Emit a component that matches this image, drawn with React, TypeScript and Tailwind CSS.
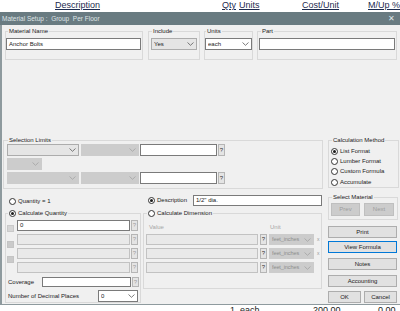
import React from "react";

type Kind = "white" | "light" | "disabled";

const Chevron = ({ c }: { c: string }) => (
  <svg width="7" height="4" viewBox="0 0 7 4" className="shrink-0">
    <polyline points="0.5,0.5 3.5,3.3 6.5,0.5" fill="none" stroke={c} strokeWidth="0.8" />
  </svg>
);

function Select({ cls, kind, value, tcls = "" }: { cls: string; kind: Kind; value?: string; tcls?: string }) {
  const base =
    kind === "white"
      ? "bg-white border-[#7a7a7a]"
      : kind === "light"
      ? "bg-[#e5e5e5] border-[#acacac]"
      : "bg-[#cccccc] border-[#cccccc]";
  return (
    <div className={`${cls} ${base} border flex items-center pl-[2px] pr-[2px] shrink-0`}>
      <span className={`flex-1 whitespace-nowrap overflow-hidden ${tcls}`}>{value}</span>
      <Chevron c={kind === "disabled" ? "#a3a3a3" : "#5a5a5a"} />
    </div>
  );
}

function Input({ cls, disabled, value }: { cls: string; disabled?: boolean; value?: string }) {
  return (
    <div
      className={`${cls} border flex items-center pl-[2px] shrink-0 whitespace-nowrap ${
        disabled ? "bg-[#e9e9e9] border-[#c2c2c2]" : "bg-white border-[#7a7a7a]"
      }`}
    >
      {value}
    </div>
  );
}

function Q({ cls, dim }: { cls: string; dim?: boolean }) {
  return (
    <div
      className={`${cls} w-[7px] border border-[#b5b5b5] bg-[#e4e4e4] flex items-center justify-center shrink-0 text-[6px] ${
        dim ? "text-[#9d9d9d]" : "text-[#333]"
      }`}
    >
      ?
    </div>
  );
}

const Radio = ({ on }: { on?: boolean }) => (
  <span className="w-[7px] h-[7px] rounded-full border border-[#333] bg-white flex items-center justify-center shrink-0">
    {on && <span className="w-[3px] h-[3px] rounded-full bg-[#1a1a1a]" />}
  </span>
);

function Group({
  cls,
  label,
  labelCls = "left-[2px]",
  children,
  inner = "",
}: {
  cls: string;
  label: React.ReactNode;
  labelCls?: string;
  children?: React.ReactNode;
  inner?: string;
}) {
  return (
    <div className={`${cls} relative border border-[#d9d9d9] shrink-0`}>
      <div className={`absolute -top-[4px] ${labelCls} bg-[#f0f0f0] px-[1px] leading-[7px] flex items-center whitespace-nowrap`}>
        {label}
      </div>
      <div className={inner}>{children}</div>
    </div>
  );
}

function Btn({ cls, children, extra = "" }: { cls: string; children: React.ReactNode; extra?: string }) {
  return (
    <div className={`${cls} h-[12px] bg-[#e1e1e1] border border-[#adadad] flex items-center justify-center whitespace-nowrap shrink-0 ${extra}`}>
      {children}
    </div>
  );
}

export default function App() {
  return (
    <div className="w-[400px] h-[311px] overflow-hidden bg-white flex flex-col font-['Liberation_Sans',Arial,sans-serif] text-[#1a1a1a]">
      {/* underlying list header */}
      <div className="h-[12px] shrink-0 flex items-start text-[9px] leading-[11px] text-[#1d2b4f]">
        <span className="w-[222px] pl-[55px]">
          <span className="underline">Description</span>
        </span>
        <span className="w-[17px]">
          <span className="underline">Qty</span>
        </span>
        <span className="w-[63px]">
          <span className="underline">Units</span>
        </span>
        <span className="w-[66px]">
          <span className="underline">Cost/Unit</span>
        </span>
        <span className="underline whitespace-nowrap">M/Up %</span>
      </div>

      {/* title bar */}
      <div className="h-[13px] shrink-0 bg-[#697b81] flex items-center pl-[2px] pr-[5px] text-[6.5px] text-[#dfe5e7]">
        <span className="whitespace-pre">Material Setup :  Group  Per Floor</span>
        <span className="ml-auto text-[8px] leading-[8px]">✕</span>
      </div>

      {/* dialog body */}
      <div className="h-[280px] shrink-0 bg-[#f0f0f0] border-l-2 border-b border-[#8e9a9e] flex flex-col text-[6px] leading-[7px]">
        {/* section A */}
        <div className="flex pt-[6px] h-[35px] shrink-0">
          <Group cls="ml-[3px] w-[138px] h-[29px]" label="Material Name" inner="pt-[6px]">
            <Input cls="w-[135px] h-[12px]" value="Anchor Bolts" />
          </Group>
          <Group cls="ml-[5px] w-[52px] h-[29px]" label="Include" labelCls="left-[3px]" inner="pt-[6px] pl-[2px]">
            <Select cls="w-[46px] h-[12px]" kind="light" value="Yes" />
          </Group>
          <Group cls="ml-[4px] w-[49px] h-[29px]" label="Units" labelCls="left-[1px]" inner="pt-[6px]">
            <Select cls="w-[47px] h-[12px]" kind="white" value="each" />
          </Group>
          <Group cls="ml-[4px] w-[140px] h-[29px]" label="Part" labelCls="left-[3px]" inner="pt-[6px] pl-[1px]">
            <Input cls="w-[136px] h-[12px]" />
          </Group>
        </div>

        {/* section B */}
        <div className="flex mt-[80px] h-[49px] shrink-0">
          <Group
            cls="ml-[1px] w-[320px] h-[49px]"
            label="Selection Limits"
            labelCls="left-[4px]"
            inner="pt-[3px] pl-[3px] flex flex-col gap-[2px]"
          >
            <div className="flex">
              <Select cls="w-[72px] h-[12px]" kind="light" />
              <Select cls="ml-[2px] w-[58px] h-[12px]" kind="disabled" />
              <Input cls="ml-[1px] w-[77px] h-[12px]" />
              <Q cls="ml-[1px] h-[12px]" />
            </div>
            <div className="flex">
              <Select cls="w-[35px] h-[12px]" kind="disabled" />
            </div>
            <div className="flex">
              <Select cls="w-[72px] h-[12px]" kind="disabled" />
              <Select cls="ml-[2px] w-[58px] h-[12px]" kind="disabled" />
              <Input cls="ml-[1px] w-[77px] h-[12px]" />
              <Q cls="ml-[1px] h-[12px]" />
            </div>
          </Group>
          <Group
            cls="ml-[5px] w-[71px] h-[48px]"
            label="Calculation Method"
            labelCls="left-[3px]"
            inner="pt-[5px] pl-[2px] flex flex-col"
          >
            {[
              ["List Format", true],
              ["Lumber Format", false],
              ["Custom Formula", false],
              ["Accumulate", false],
            ].map(([t, on]) => (
              <div key={t as string} className="h-[10.4px] flex items-center gap-[2px] whitespace-nowrap">
                <Radio on={on as boolean} />
                <span>{t as string}</span>
              </div>
            ))}
          </Group>
        </div>

        {/* section C */}
        <div className="flex h-[116px] shrink-0">
          {/* left column */}
          <div className="ml-[3px] w-[136px] flex flex-col shrink-0">
            <div className="mt-[7px] h-[10px] flex items-center pl-[4px] gap-[2px] whitespace-nowrap">
              <Radio />
              <span>Quantity = 1</span>
            </div>
            <Group
              cls="mt-[7px] h-[90px] w-[136px]"
              labelCls="left-[2px]"
              label={
                <span className="flex items-center gap-[2px]">
                  <Radio on />
                  <span>Calculate Quantity</span>
                </span>
              }
              inner="flex flex-col"
            >
              <div className="flex">
                <div className="pl-[1px] w-[11px] flex flex-col shrink-0">
                  <span className="mt-[11px] w-[7px] h-[7px] bg-[#d6d6d6] border border-[#c9c9c9]" />
                  <span className="mt-[9px] w-[7px] h-[7px] bg-[#cacaca] border border-[#c4c4c4]" />
                  <span className="mt-[8px] w-[7px] h-[7px] bg-[#cacaca] border border-[#c4c4c4]" />
                </div>
                <div className="pt-[6px] flex flex-col gap-[3px]">
                  <div className="flex">
                    <Input cls="w-[113px] h-[11px]" value="0" />
                    <Q cls="ml-[1px] h-[11px]" dim />
                  </div>
                  <div className="flex">
                    <Input cls="w-[113px] h-[11px]" disabled />
                    <Q cls="ml-[1px] h-[11px]" dim />
                  </div>
                  <div className="flex">
                    <Input cls="w-[113px] h-[11px]" disabled />
                    <Q cls="ml-[1px] h-[11px]" dim />
                  </div>
                  <div className="flex">
                    <Input cls="w-[113px] h-[11px]" disabled />
                    <Q cls="ml-[1px] h-[11px]" dim />
                  </div>
                </div>
              </div>
              <div className="mt-[4px] flex items-center pl-[2px]">
                <span className="w-[34px]">Coverage</span>
                <Input cls="w-[89px] h-[10px]" />
                <Q cls="ml-[1px] h-[10px]" dim />
              </div>
              <div className="mt-[3px] flex items-center pl-[2px]">
                <span className="w-[90px] whitespace-nowrap">Number of Decimal Places</span>
                <Select cls="w-[40px] h-[12px]" kind="white" value="0" />
              </div>
            </Group>
          </div>

          {/* middle column */}
          <div className="ml-[2px] w-[179px] flex flex-col shrink-0">
            <div className="mt-[6px] h-[11px] flex items-center pl-[5px] whitespace-nowrap">
              <Radio on />
              <span className="ml-[2px]">Description</span>
              <Input cls="ml-auto w-[129px] h-[11px]" value={'1/2" dia.'} />
            </div>
            <Group
              cls="mt-[7px] h-[76px] w-[179px]"
              labelCls="left-[3px]"
              label={
                <span className="flex items-center gap-[2px]">
                  <Radio />
                  <span>Calculate Dimension</span>
                </span>
              }
              inner="flex flex-col"
            >
              <div className="mt-[9px] h-[8px] flex items-center pl-[5px] text-[#a6a6a6]">
                <span className="w-[121px]">Value</span>
                <span>Unit</span>
              </div>
              <div className="mt-[3px] flex flex-col gap-[3px] pl-[2px]">
                {[true, true, false].map((x, i) => (
                  <div key={i} className="flex items-center">
                    <Input cls="w-[112px] h-[11px]" disabled />
                    <Q cls="ml-[2px] h-[11px]" />
                    <Select
                      cls="ml-[2px] w-[45px] h-[11px]"
                      kind="disabled"
                      value="feet_inches"
                      tcls="text-[5.5px] text-[#8c8c8c] tracking-[-0.1px]"
                    />
                    {x && <span className="ml-[3px] text-[5px] text-[#9a9a9a]">x</span>}
                  </div>
                ))}
              </div>
            </Group>
          </div>

          {/* right column */}
          <div className="ml-[6px] w-[70px] flex flex-col shrink-0">
            <Group cls="mt-[8px] h-[23px] w-[70px]" label="Select Material" labelCls="left-[3px]" inner="pt-[5px] pl-[2px] flex">
              <div className="w-[29px] h-[13px] bg-[#cccccc] border border-[#bfbfbf] text-[#9c9c9c] flex items-center justify-center">
                Prev
              </div>
              <div className="ml-[4px] w-[30px] h-[13px] bg-[#cccccc] border border-[#bfbfbf] text-[#9c9c9c] flex items-center justify-center">
                Next
              </div>
            </Group>
            <Btn cls="mt-[6px] w-[69px]">Print</Btn>
            <Btn cls="mt-[3px] w-[69px]" extra="!border-[#0078d7]">
              View Formula
            </Btn>
            <Btn cls="mt-[5px] w-[69px]">Notes</Btn>
            <Btn cls="mt-[5px] w-[69px]">Accounting</Btn>
            <div className="mt-[4px] flex">
              <Btn cls="w-[33px]">OK</Btn>
              <Btn cls="ml-[3px] w-[33px]">Cancel</Btn>
            </div>
          </div>
        </div>
      </div>

      {/* underlying list row peeking below */}
      <div className="flex-1 overflow-hidden bg-white text-[9px] leading-[11px] text-[#222] flex">
        <span className="w-[230px]" />
        <span className="w-[83px] whitespace-pre">1  each</span>
        <span className="w-[65px]">200.00</span>
        <span>0.00</span>
      </div>
    </div>
  );
}
